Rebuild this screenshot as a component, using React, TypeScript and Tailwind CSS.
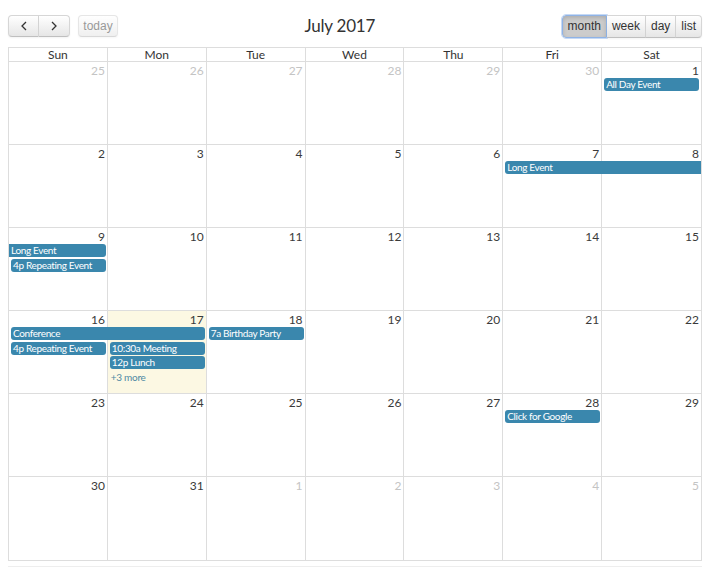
import React from "react";

type Day = { d: number; o?: boolean; today?: boolean };
type Ev = {
  col: number;
  span: number;
  row: number;
  title: string;
  time?: string;
  start?: boolean;
  end?: boolean;
  more?: boolean;
};

const colStart: Record<number, string> = {
  1: "col-start-1",
  2: "col-start-2",
  3: "col-start-3",
  4: "col-start-4",
  5: "col-start-5",
  6: "col-start-6",
  7: "col-start-7",
};
const colSpan: Record<number, string> = {
  1: "col-span-1",
  2: "col-span-2",
  3: "col-span-3",
};
const rowStart: Record<number, string> = {
  2: "row-start-2",
  3: "row-start-3",
  4: "row-start-4",
  5: "row-start-5",
};

const weeks: { days: Day[]; events: Ev[] }[] = [
  {
    days: [
      { d: 25, o: true },
      { d: 26, o: true },
      { d: 27, o: true },
      { d: 28, o: true },
      { d: 29, o: true },
      { d: 30, o: true },
      { d: 1 },
    ],
    events: [{ col: 7, span: 1, row: 2, title: "All Day Event" }],
  },
  {
    days: [2, 3, 4, 5, 6, 7, 8].map((d) => ({ d })),
    events: [{ col: 6, span: 2, row: 2, title: "Long Event", end: false }],
  },
  {
    days: [9, 10, 11, 12, 13, 14, 15].map((d) => ({ d })),
    events: [
      { col: 1, span: 1, row: 2, title: "Long Event", start: false },
      { col: 1, span: 1, row: 3, time: "4p", title: "Repeating Event" },
    ],
  },
  {
    days: [16, 17, 18, 19, 20, 21, 22].map((d) => ({ d, today: d === 17 })),
    events: [
      { col: 1, span: 2, row: 2, title: "Conference" },
      { col: 3, span: 1, row: 2, time: "7a", title: "Birthday Party" },
      { col: 1, span: 1, row: 3, time: "4p", title: "Repeating Event" },
      { col: 2, span: 1, row: 3, time: "10:30a", title: "Meeting" },
      { col: 2, span: 1, row: 4, time: "12p", title: "Lunch" },
      { col: 2, span: 1, row: 5, title: "+3 more", more: true },
    ],
  },
  {
    days: [23, 24, 25, 26, 27, 28, 29].map((d) => ({ d })),
    events: [{ col: 6, span: 1, row: 2, title: "Click for Google" }],
  },
  {
    days: [
      { d: 30 },
      { d: 31 },
      { d: 1, o: true },
      { d: 2, o: true },
      { d: 3, o: true },
      { d: 4, o: true },
      { d: 5, o: true },
    ],
    events: [],
  },
];

const heads = ["Sun", "Mon", "Tue", "Wed", "Thu", "Fri", "Sat"];

const btnBase =
  "h-[22px] border border-[#d6d6d6] border-b-[#bfbfbf] bg-gradient-to-b from-white to-[#e6e6e6] text-[#333] text-[12px] flex items-center justify-center shadow-[inset_0_1px_0_rgba(255,255,255,0.2),0_1px_2px_rgba(0,0,0,0.05)]";

function Chevron({ dir }: { dir: "l" | "r" }) {
  return (
    <svg width="8" height="10" viewBox="0 0 8 10" fill="none">
      {dir === "l" ? (
        <path d="M6 1 L2 5 L6 9" stroke="#333" strokeWidth="1.3" />
      ) : (
        <path d="M2 1 L6 5 L2 9" stroke="#333" strokeWidth="1.3" />
      )}
    </svg>
  );
}

export default function App() {
  return (
    <div
      className="w-[710px] h-[574px] bg-white overflow-hidden"
      style={{ fontFamily: "Lato, 'Open Sans', sans-serif" }}
    >
      <div className="pt-[15px] px-[8px]">
        {/* Toolbar */}
        <div
          className="flex items-center h-[22px] mb-[10px]"
          style={{ fontFamily: "'Liberation Sans', Arial, sans-serif" }}
        >
          <div className="flex items-center gap-[8px]">
            <div className="flex">
              <button className={`${btnBase} w-[31px] rounded-l-[4px]`}>
                <Chevron dir="l" />
              </button>
              <button className={`${btnBase} w-[31px] rounded-r-[4px] border-l-0`}>
                <Chevron dir="r" />
              </button>
            </div>
            <button className={`${btnBase} w-[40px] rounded-[4px] opacity-60 text-[#555]`}>
              today
            </button>
          </div>
          <div
            className="flex-1 text-center text-[17px] tracking-[-0.2px] text-[#333] leading-[22px] -mt-[1px]"
            style={{ fontFamily: "Lato, sans-serif" }}
          >
            July 2017
          </div>
          <div className="flex justify-end">
            <button className="h-[23px] px-[5px] rounded-l-[4px] border border-[#8fb3e6] bg-[#cccccc] text-[#333] text-[12px] shadow-[inset_0_2px_4px_rgba(0,0,0,0.15)] outline outline-1 outline-[#c5d9f5]">
              month
            </button>
            <button className={`${btnBase} h-[23px] px-[5px] border-l-0`}>week</button>
            <button className={`${btnBase} h-[23px] px-[5px] border-l-0`}>day</button>
            <button className={`${btnBase} h-[23px] px-[5px] border-l-0 rounded-r-[4px]`}>
              list
            </button>
          </div>
        </div>

        {/* Calendar table */}
        <div className="w-[694px] border border-[#dddddd]">
          <div className="grid grid-cols-7 h-[14px] border-b border-[#dddddd]">
            {heads.map((h, i) => (
              <div
                key={h}
                className={`text-center text-[12px] leading-[13px] text-[#333] ${
                  i < 6 ? "border-r border-[#dddddd]" : ""
                }`}
              >
                {h}
              </div>
            ))}
          </div>
          {weeks.map((w, wi) => (
            <div
              key={wi}
              className={`grid grid-cols-7 grid-rows-[16px_14.5px_14.5px_14.5px_14.5px_1fr] h-[83px] ${
                wi < 5 ? "border-b border-[#dddddd]" : ""
              }`}
            >
              {w.days.map((day, di) => (
                <div
                  key={di}
                  className={`${colStart[di + 1]} row-span-full ${
                    di < 6 ? "border-r border-[#dddddd]" : ""
                  } ${day.today ? "bg-[#fcf8e3]" : ""}`}
                >
                  <div
                    className={`text-right pr-[2px] pt-[2px] text-[12px] leading-[13px] ${
                      day.o ? "text-[#c4c4c4]" : "text-[#3a3a3a]"
                    }`}
                  >
                    {day.d}
                  </div>
                </div>
              ))}
              {w.events.map((e, ei) =>
                e.more ? (
                  <div
                    key={ei}
                    className={`${colStart[e.col]} ${colSpan[e.span]} ${rowStart[e.row]} ml-[3px] text-[10px] tracking-[-0.3px] leading-[13px] text-[#4f8aa3]`}
                  >
                    {e.title}
                  </div>
                ) : (
                  <div
                    key={ei}
                    className={`${colStart[e.col]} ${colSpan[e.span]} ${rowStart[e.row]} h-[13px] bg-[#3a87ad] text-white text-[10px] tracking-[-0.35px] leading-[13px] px-[2px] whitespace-nowrap overflow-hidden ${
                      e.start === false ? "ml-0 rounded-l-none" : "ml-[2px] rounded-l-[3px]"
                    } ${e.end === false ? "mr-0 rounded-r-none" : "mr-[2px] rounded-r-[3px]"}`}
                  >
                    {e.time && <span>{e.time} </span>}
                    {e.title}
                  </div>
                )
              )}
            </div>
          ))}
        </div>
        <div className="mt-[5px] border-t border-[#eeeeee] h-[4px]" />
      </div>
    </div>
  );
}
